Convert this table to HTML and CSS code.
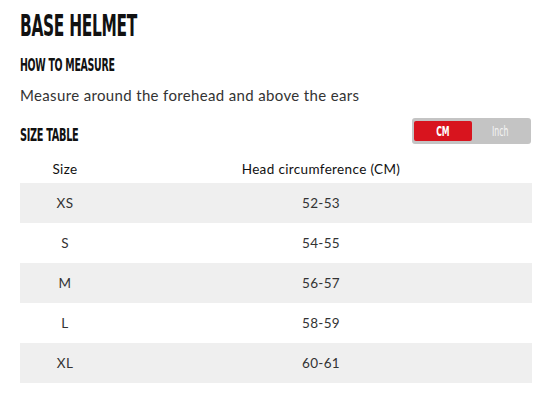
FILE: index.html
```html
<!DOCTYPE html>
<html>
<head>
<meta charset="utf-8">
<link rel="stylesheet" href="styles.css">
</head>
<body>
<div class="page">
  <h1 class="title"><span class="cond">BASE HELMET</span></h1>
  <h2 class="sub"><span class="cond">HOW TO MEASURE</span></h2>
  <p class="desc">Measure around the forehead and above the ears</p>
  <div class="table-head">
    <h2 class="sub"><span class="cond">SIZE TABLE</span></h2>
    <div class="toggle">
      <span class="opt active"><span class="cond-s">CM</span></span>
      <span class="opt"><span class="cond-s">Inch</span></span>
    </div>
  </div>
  <div class="table">
    <div class="row head"><div class="c1">Size</div><div class="c2">Head circumference (CM)</div></div>
    <div class="row odd"><div class="c1">XS</div><div class="c2">52-53</div></div>
    <div class="row"><div class="c1">S</div><div class="c2">54-55</div></div>
    <div class="row odd"><div class="c1">M</div><div class="c2">56-57</div></div>
    <div class="row"><div class="c1">L</div><div class="c2">58-59</div></div>
    <div class="row odd"><div class="c1">XL</div><div class="c2">60-61</div></div>
  </div>
</div>
</body>
</html>
```
FILE: styles.css
```css
html, body { margin: 0; padding: 0; background: #fff; }
.page { padding: 8px 28px 0 20px; font-family: "Lato", "Open Sans", sans-serif; color: #333; }
.cond { display: inline-block; font-family: "DejaVu Sans Condensed", "DejaVu Sans", sans-serif; font-weight: bold; transform: scaleX(0.6); transform-origin: left center; white-space: nowrap; color: #111; letter-spacing: -0.5px; }
.title { margin: 0; font-size: 30px; line-height: 32px; height: 32px; }
.title .cond { transform: scaleX(0.57); }
.sub { margin: 0; font-size: 17.5px; line-height: 20px; }
.page > .sub { margin-top: 15px; }
.desc { margin: 10px 0 0; font-size: 15px; line-height: 20px; color: #333; letter-spacing: 0.35px; }
.table-head { display: flex; justify-content: space-between; align-items: center; margin-top: 14px; height: 26px; }
.table-head .sub { margin-top: 6px; }
.table-head .sub .cond { transform: scaleX(0.62); }
.toggle { display: flex; width: 119px; height: 26px; box-sizing: border-box; padding: 3px 2px 3px 2px; background: #c4c4c4; border-radius: 3px; margin-right: 1px; margin-top: -3px; }
.opt { flex: 1; display: flex; align-items: center; justify-content: center; font-family: "DejaVu Sans Condensed", sans-serif; font-size: 14px; color: #f4f4f4; border-radius: 2px; }
.opt.active { background: #d8141e; flex: 0 0 58px; color: #fff; font-weight: bold; }
.cond-s { display: inline-block; transform: scaleX(0.62); }
.table { margin-top: 6px; }
.row { display: flex; height: 40px; align-items: center; font-size: 13.5px; letter-spacing: 0.35px; color: #333; }
.row.head { height: 32px; color: #111; padding-top: 4px; box-sizing: border-box; }
.row.odd { background: #efefef; }
.c1 { width: 90px; text-align: center; }
.c2 { flex: 1; text-align: center; }
```
